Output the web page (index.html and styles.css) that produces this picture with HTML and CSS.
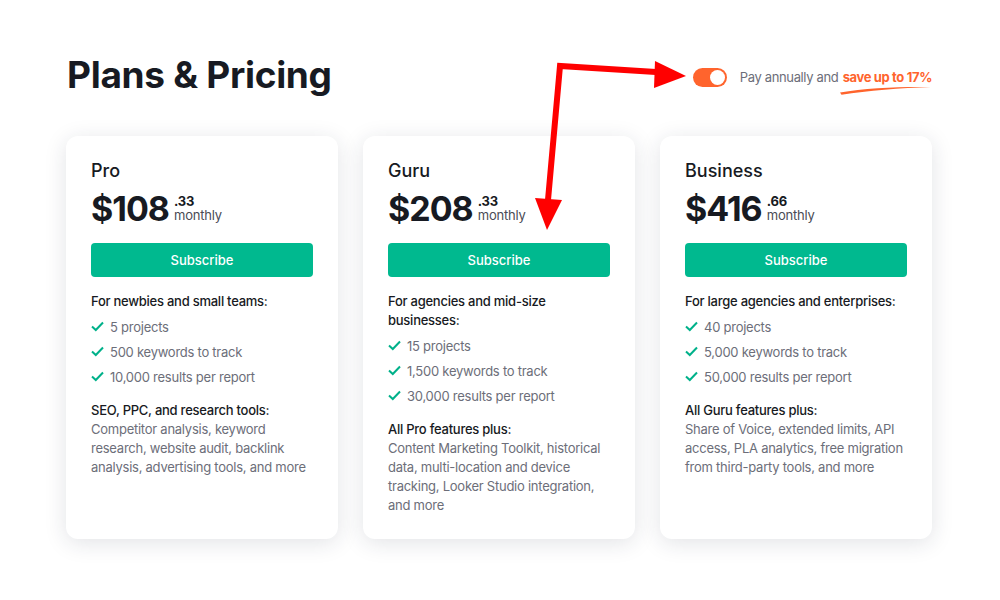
FILE: index.html
```html
<!DOCTYPE html>
<html lang="en">
<head>
    <meta charset="UTF-8">
    <meta name="viewport" content="width=device-width, initial-scale=1.0">
    <title>Plans &amp; Pricing</title>
<link rel="stylesheet" href="styles.css">
</head>
<body>
    <div class="page">
        <div class="header">
            <h1>Plans &amp; Pricing</h1>
            <div class="billing">
                <span class="toggle"><span class="knob"></span></span>
                <span class="billing-text">Pay annually and <span class="save">save up to 17%<svg class="swoosh" width="92" height="9" viewBox="0 0 92 9"><path d="M0 6.5 C 25 2, 60 0.5, 91 1 C 60 2.2, 28 4.5, 1.5 8.8 Z" fill="#ff642d"/></svg></span></span>
            </div>
        </div>

        <div class="plans">
            <div class="card">
                <h2>Pro</h2>
                <div class="price">
                    <span class="amount">$108</span>
                    <span class="cents"><b>.33</b>monthly</span>
                </div>
                <button type="button">Subscribe</button>
                <p class="lead">For newbies and small teams:</p>
                <ul>
                    <li><svg width="13" height="11" viewBox="0 0 13 11"><path d="M1 5.5 L4.8 9 L12 1.5" fill="none" stroke="#00b18a" stroke-width="2"/></svg>5 projects</li>
                    <li><svg width="13" height="11" viewBox="0 0 13 11"><path d="M1 5.5 L4.8 9 L12 1.5" fill="none" stroke="#00b18a" stroke-width="2"/></svg>500 keywords to track</li>
                    <li><svg width="13" height="11" viewBox="0 0 13 11"><path d="M1 5.5 L4.8 9 L12 1.5" fill="none" stroke="#00b18a" stroke-width="2"/></svg>10,000 results per report</li>
                </ul>
                <p class="lead extra">SEO, PPC, and research tools:</p>
                <p class="desc">Competitor analysis, keyword research, website audit, backlink analysis, advertising tools, and more</p>
            </div>

            <div class="card">
                <h2>Guru</h2>
                <div class="price">
                    <span class="amount">$208</span>
                    <span class="cents"><b>.33</b>monthly</span>
                </div>
                <button type="button">Subscribe</button>
                <p class="lead">For agencies and mid-size businesses:</p>
                <ul>
                    <li><svg width="13" height="11" viewBox="0 0 13 11"><path d="M1 5.5 L4.8 9 L12 1.5" fill="none" stroke="#00b18a" stroke-width="2"/></svg>15 projects</li>
                    <li><svg width="13" height="11" viewBox="0 0 13 11"><path d="M1 5.5 L4.8 9 L12 1.5" fill="none" stroke="#00b18a" stroke-width="2"/></svg>1,500 keywords to track</li>
                    <li><svg width="13" height="11" viewBox="0 0 13 11"><path d="M1 5.5 L4.8 9 L12 1.5" fill="none" stroke="#00b18a" stroke-width="2"/></svg>30,000 results per report</li>
                </ul>
                <p class="lead extra">All Pro features plus:</p>
                <p class="desc">Content Marketing Toolkit, historical data, multi-location and device tracking, Looker Studio integration, and more</p>
            </div>

            <div class="card">
                <h2>Business</h2>
                <div class="price">
                    <span class="amount">$416</span>
                    <span class="cents"><b>.66</b>monthly</span>
                </div>
                <button type="button">Subscribe</button>
                <p class="lead">For large agencies and enterprises:</p>
                <ul>
                    <li><svg width="13" height="11" viewBox="0 0 13 11"><path d="M1 5.5 L4.8 9 L12 1.5" fill="none" stroke="#00b18a" stroke-width="2"/></svg>40 projects</li>
                    <li><svg width="13" height="11" viewBox="0 0 13 11"><path d="M1 5.5 L4.8 9 L12 1.5" fill="none" stroke="#00b18a" stroke-width="2"/></svg>5,000 keywords to track</li>
                    <li><svg width="13" height="11" viewBox="0 0 13 11"><path d="M1 5.5 L4.8 9 L12 1.5" fill="none" stroke="#00b18a" stroke-width="2"/></svg>50,000 results per report</li>
                </ul>
                <p class="lead extra">All Guru features plus:</p>
                <p class="desc">Share of Voice, extended limits, API access, PLA analytics, free migration from third-party tools, and more</p>
            </div>
        </div>
    </div>

    <!-- annotation arrows drawn over the page -->
    <svg class="arrows" width="1000" height="600" viewBox="0 0 1000 600">
        <path d="M548 200 L560 66 L656 72" fill="none" stroke="#ff0000" stroke-width="6" stroke-linejoin="miter"/>
        <polygon points="655,61 686,76 654,88" fill="#ff0000"/>
        <polygon points="535,198 562,200 547,230" fill="#ff0000"/>
    </svg>
</body>
</html>
```

FILE: styles.css
```css
body {
    margin: 0;
    background-color: #fff;
    font-family: Inter, "Noto Sans", sans-serif;
    color: #171a22;
}

.page {
    width: 866px;
    margin-left: 66px;
    padding-bottom: 40px;
}

.header {
    display: flex;
    justify-content: space-between;
    align-items: center;
    height: 136px;
}

h1 {
    margin: 20px 0 8px 1px;
    font-size: 37px;
    font-weight: 700;
    letter-spacing: -0.3px;
}

.billing {
    display: flex;
    align-items: center;
    margin-top: 18px;
}

.toggle {
    width: 34px;
    height: 19px;
    border-radius: 10px;
    background-color: #ff642d;
    position: relative;
    margin-right: 13px;
}

.knob {
    position: absolute;
    top: 2px;
    right: 2px;
    width: 15px;
    height: 15px;
    border-radius: 50%;
    background-color: #fff;
}

.billing-text {
    font-size: 13px;
    letter-spacing: -0.36px;
    color: #6c6e79;
}

.save {
    position: relative;
    color: #ff642d;
    font-weight: 700;
    margin-left: 1px;
}

.swoosh {
    position: absolute;
    left: -3px;
    top: 17px;
}

.plans {
    display: grid;
    grid-template-columns: repeat(3, 1fr);
    gap: 25px;
}

.card {
    background-color: #fff;
    border-radius: 12px;
    box-shadow: 0 4px 22px rgba(30, 35, 60, 0.13);
    padding: 23px 25px 24px;
}

h2 {
    margin: 0;
    font-size: 18px;
    font-weight: 500;
    line-height: 24px;
}

.price {
    display: flex;
    align-items: flex-start;
    margin-top: 4px;
    height: 44px;
}

.amount {
    font-size: 34px;
    font-weight: 700;
    line-height: 44px;
    letter-spacing: -1px;
}

.cents {
    display: flex;
    flex-direction: column;
    margin: 7px 0 0 5px;
    font-size: 13px;
    line-height: 14px;
    letter-spacing: -0.2px;
    color: #4a4c55;
}

.cents b {
    color: #171a22;
}

button {
    display: block;
    width: 100%;
    height: 34px;
    margin-top: 12px;
    border: none;
    border-radius: 4px;
    background-color: #00b98f;
    color: #fff;
    font-family: inherit;
    font-size: 13px;
    font-weight: 500;
}

.lead {
    margin: 15px 0 0;
    font-size: 13px;
    font-weight: 500;
    line-height: 19px;
    letter-spacing: -0.25px;
}

ul {
    list-style: none;
    margin: 3px 0 0;
    padding: 0;
}

li {
    display: flex;
    align-items: center;
    height: 25px;
    font-size: 13px;
    letter-spacing: -0.25px;
    color: #6c6e79;
}

li svg {
    margin-right: 6px;
}

.extra {
    margin-top: 12px;
}

.desc {
    margin: 0;
    font-size: 13px;
    line-height: 19px;
    letter-spacing: -0.25px;
    color: #6c6e79;
}

.arrows {
    position: absolute;
    top: 0;
    left: 0;
    pointer-events: none;
}
```
